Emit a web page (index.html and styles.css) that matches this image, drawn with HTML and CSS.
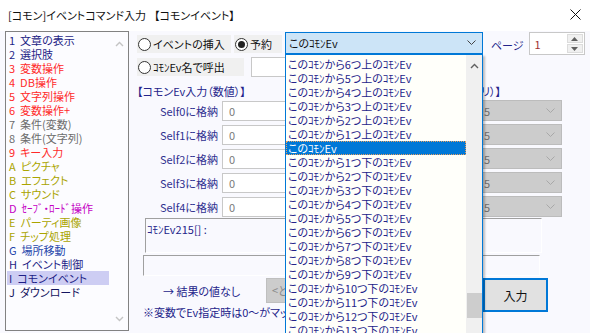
FILE: index.html
```html
<!DOCTYPE html>
<html lang="ja">
<head>
    <meta charset="UTF-8">
    <title>コモンイベント</title>
    <link rel="stylesheet" href="styles.css">
</head>
<body>
    <div class="titlebar">
        <span class="title">[コモン]イベントコマンド入力<span class="title-sub">【コモンイベント】</span></span>
        <svg class="close" width="11" height="11" viewBox="0 0 11 11">
            <path d="M0.5 0.5 L10.5 10.5 M10.5 0.5 L0.5 10.5" stroke="#111" stroke-width="1" fill="none"/>
        </svg>
    </div>

    <div class="main">
        <div class="cmdlist">
            <ul>
                <li class="navy"><b>1</b>文章の表示</li>
                <li class="navy"><b>2</b>選択肢</li>
                <li class="red"><b>3</b>変数操作</li>
                <li class="red"><b>4</b>DB操作</li>
                <li class="red"><b>5</b>文字列操作</li>
                <li class="red"><b>6</b>変数操作+</li>
                <li class="gray"><b>7</b>条件(変数)</li>
                <li class="gray"><b>8</b>条件(文字列)</li>
                <li class="red"><b>9</b>キー入力</li>
                <li class="olive"><b>A</b>ピクチャ</li>
                <li class="olive"><b>B</b>エフェクト</li>
                <li class="olive"><b>C</b>サウンド</li>
                <li class="magenta"><b>D</b>ｾｰﾌﾞ・ﾛｰﾄﾞ操作</li>
                <li class="olive"><b>E</b>パーティ画像</li>
                <li class="olive"><b>F</b>チップ処理</li>
                <li class="blue"><b>G</b>場所移動</li>
                <li class="navy"><b>H</b>イベント制御</li>
                <li class="navy current"><b>I</b>コモンイベント</li>
                <li class="dark"><b>J</b>ダウンロード</li>
            </ul>
            <div class="vscroll">
                <svg width="9" height="6" viewBox="0 0 9 6"><path d="M1 5 L4.5 1.5 L8 5" stroke="#c4c4c4" stroke-width="1.4" fill="none"/></svg>
                <svg width="9" height="6" viewBox="0 0 9 6"><path d="M1 1 L4.5 4.5 L8 1" stroke="#c4c4c4" stroke-width="1.4" fill="none"/></svg>
            </div>
        </div>

        <div class="panel">
            <div class="row1">
                <label class="radio box-insert"><span class="dot"></span>イベントの挿入</label>
                <label class="radio box-reserve"><span class="dot on"></span>予約</label>
                <div class="combo">
                    <span class="combo-text">このｺﾓﾝEv</span>
                    <svg width="9" height="6" viewBox="0 0 9 6"><path d="M0.5 0.5 L4.5 4.5 L8.5 0.5" stroke="#444" stroke-width="1" fill="none"/></svg>

                    <div class="droplist">
                        <ul>
                            <li>このｺﾓﾝから6つ上のｺﾓﾝEv</li>
                            <li>このｺﾓﾝから5つ上のｺﾓﾝEv</li>
                            <li>このｺﾓﾝから4つ上のｺﾓﾝEv</li>
                            <li>このｺﾓﾝから3つ上のｺﾓﾝEv</li>
                            <li>このｺﾓﾝから2つ上のｺﾓﾝEv</li>
                            <li>このｺﾓﾝから1つ上のｺﾓﾝEv</li>
                            <li class="selected">このｺﾓﾝEv</li>
                            <li>このｺﾓﾝから1つ下のｺﾓﾝEv</li>
                            <li>このｺﾓﾝから2つ下のｺﾓﾝEv</li>
                            <li>このｺﾓﾝから3つ下のｺﾓﾝEv</li>
                            <li>このｺﾓﾝから4つ下のｺﾓﾝEv</li>
                            <li>このｺﾓﾝから5つ下のｺﾓﾝEv</li>
                            <li>このｺﾓﾝから6つ下のｺﾓﾝEv</li>
                            <li>このｺﾓﾝから7つ下のｺﾓﾝEv</li>
                            <li>このｺﾓﾝから8つ下のｺﾓﾝEv</li>
                            <li>このｺﾓﾝから9つ下のｺﾓﾝEv</li>
                            <li>このｺﾓﾝから10つ下のｺﾓﾝEv</li>
                            <li>このｺﾓﾝから11つ下のｺﾓﾝEv</li>
                            <li>このｺﾓﾝから12つ下のｺﾓﾝEv</li>
                            <li>このｺﾓﾝから13つ下のｺﾓﾝEv</li>
                        </ul>
                        <div class="dscroll">
                            <svg width="9" height="6" viewBox="0 0 9 6"><path d="M1 5 L4.5 1.5 L8 5" stroke="#606060" stroke-width="1.4" fill="none"/></svg>
                            <div class="thumb"></div>
                        </div>
                    </div>
                </div>
                <span class="page-label">ページ</span>
                <div class="spin">
                    <span class="spin-val">1</span>
                    <div class="spin-btns">
                        <span><svg width="7" height="4" viewBox="0 0 7 4"><path d="M0 4 L3.5 0 L7 4 Z" fill="#606060"/></svg></span>
                        <span><svg width="7" height="4" viewBox="0 0 7 4"><path d="M0 0 L3.5 4 L7 0 Z" fill="#606060"/></svg></span>
                    </div>
                </div>
            </div>

            <div class="row2">
                <label class="radio box-name"><span class="dot"></span>ｺﾓﾝEv名で呼出</label>
                <div class="textbox name-input"></div>
            </div>

            <div class="heading-row">
                <span>【コモンEv入力（数値）】</span>
                <span>【呼出元ﾘｽﾄ（数値リ）】</span>
            </div>

            <div class="self-grid">
                <span class="self-label">Self0に格納</span>
                <div class="textbox">0</div>
                <div class="dsel">5<svg width="9" height="6" viewBox="0 0 9 6"><path d="M0.5 0.5 L4.5 4.5 L8.5 0.5" stroke="#a8a8a8" fill="none"/></svg></div>

                <span class="self-label">Self1に格納</span>
                <div class="textbox">0</div>
                <div class="dsel">5<svg width="9" height="6" viewBox="0 0 9 6"><path d="M0.5 0.5 L4.5 4.5 L8.5 0.5" stroke="#a8a8a8" fill="none"/></svg></div>

                <span class="self-label">Self2に格納</span>
                <div class="textbox">0</div>
                <div class="dsel">5<svg width="9" height="6" viewBox="0 0 9 6"><path d="M0.5 0.5 L4.5 4.5 L8.5 0.5" stroke="#a8a8a8" fill="none"/></svg></div>

                <span class="self-label">Self3に格納</span>
                <div class="textbox">0</div>
                <div class="dsel">5<svg width="9" height="6" viewBox="0 0 9 6"><path d="M0.5 0.5 L4.5 4.5 L8.5 0.5" stroke="#a8a8a8" fill="none"/></svg></div>

                <span class="self-label">Self4に格納</span>
                <div class="textbox">0</div>
                <div class="dsel">5<svg width="9" height="6" viewBox="0 0 9 6"><path d="M0.5 0.5 L4.5 4.5 L8.5 0.5" stroke="#a8a8a8" fill="none"/></svg></div>
            </div>

            <div class="sunken memo">ｺﾓﾝEv215[] :</div>
            <div class="sunken line"></div>

            <div class="bottom">
                <div class="bottom-left">
                    <div class="result-row">
                        <span class="result-text">→ 結果の値なし</span>
                        <div class="btn-disabled">&lt;どのイベントでも可&gt;</div>
                    </div>
                    <div class="note">※変数でEv指定時は0～がマップEv</div>
                </div>
                <div class="btn-enter">入力</div>
            </div>
        </div>
    </div>
</body>
</html>
```

FILE: styles.css
```css
body, ul, li {
    margin: 0;
    padding: 0;
}
body {
    width: 590px;
    height: 333px;
    overflow: hidden;
    background: #f9f9fe;
    font-family: "Noto Sans CJK JP", "Noto Sans", sans-serif;
    font-feature-settings: "palt";
    font-size: 11px;
    color: #24248a;
}
ul {
    list-style: none;
}

/* タイトルバー */
.titlebar {
    height: 31px;
    background: #fff;
    display: flex;
    align-items: center;
    justify-content: space-between;
    padding: 0 9px 2px 8px;
    box-sizing: border-box;
}
.title {
    color: #111;
    font-size: 11px;
}
.title-sub {
    margin-left: 8px;
}

.main {
    display: flex;
    align-items: flex-start;
    padding-left: 5px;
}

/* 左のコマンド一覧 */
.cmdlist {
    width: 122px;
    height: 298px;
    border: 1px solid #828282;
    background: #fcfcff;
    display: flex;
}
.cmdlist ul {
    width: 102px;
    margin: 1px 0 0 1px;
}
.cmdlist li {
    height: 14px;
    line-height: 14px;
    padding-left: 2px;
    white-space: nowrap;
}
.cmdlist li b {
    font-weight: normal;
    margin-right: 5px;
}
.cmdlist .current {
    background: #cdcdf3;
}
.navy { color: #1e1e86; }
.red { color: #ff2a2a; }
.gray { color: #6c6c6c; }
.olive { color: #aaa400; }
.magenta { color: #c400c4; }
.blue { color: #2244aa; }
.dark { color: #141460; }
.vscroll {
    width: 17px;
    margin-left: auto;
    display: flex;
    flex-direction: column;
    justify-content: space-between;
    align-items: center;
    padding: 9px 0 8px;
}

/* 右側 */
.panel {
    margin-left: 8px;
    width: 453px;
    display: flex;
    flex-direction: column;
}
.row1 {
    display: flex;
    align-items: flex-start;
    margin-top: 1px;
}
.radio {
    display: flex;
    align-items: center;
    height: 18px;
    background: #f0f0f0;
    color: #111;
    box-sizing: border-box;
    padding-left: 1px;
    white-space: nowrap;
}
.dot {
    width: 13px;
    height: 13px;
    border: 1px solid #333;
    border-radius: 50%;
    background: #fff;
    box-sizing: border-box;
    margin-right: 2px;
    position: relative;
}
.dot.on::after {
    content: "";
    position: absolute;
    left: 2px;
    top: 2px;
    width: 7px;
    height: 7px;
    border-radius: 50%;
    background: #222;
}
.box-insert {
    width: 94px;
    margin-top: 3px;
}
.box-reserve {
    width: 48px;
    margin: 3px 0 0 3px;
}
.combo {
    position: relative;
    width: 198px;
    height: 22px;
    margin-left: 3px;
    border: 1px solid #0078d7;
    background: #cce4f7;
    box-sizing: border-box;
    display: flex;
    align-items: center;
    justify-content: space-between;
    padding: 0 6px 0 3px;
    color: #111;
}
.droplist {
    position: absolute;
    z-index: 10;
    left: -1px;
    top: 21px;
    width: 198px;
    height: 279px;
    overflow: hidden;
    border: 1px solid #0078d7;
    border-bottom: none;
    background: #fffffa;
    box-sizing: border-box;
    display: flex;
    box-shadow: 2px 2px 2px rgba(0, 0, 0, 0.25);
}
.droplist ul {
    flex: 1;
    padding-top: 2px;
}
.droplist li {
    height: 14px;
    line-height: 14px;
    padding-left: 2px;
    white-space: nowrap;
    color: #24248a;
}
.droplist .selected {
    background: #0078d7;
    color: #fff;
    outline: 1px dotted #e8a060;
    outline-offset: -1px;
}
.dscroll {
    width: 16px;
    background: #f0f0f0;
    display: flex;
    flex-direction: column;
    align-items: center;
    padding-top: 8px;
    box-sizing: border-box;
}
.thumb {
    width: 15px;
    height: 25px;
    background: #cdcdcd;
    margin-top: 224px;
}
.page-label {
    margin: 5px 0 0 8px;
    color: #24248a;
}
.spin {
    width: 56px;
    height: 23px;
    margin-left: 5px;
    border: 1px solid #c8c8c8;
    background: #fff;
    box-sizing: border-box;
    display: flex;
}
.spin-val {
    flex: 1;
    padding: 3px 0 0 5px;
    color: #a03030;
}
.spin-btns {
    width: 16px;
    display: flex;
    flex-direction: column;
    gap: 1px;
    padding: 1px;
}
.spin-btns span {
    flex: 1;
    background: #f0f0f0;
    border: 1px solid #dcdcdc;
    display: flex;
    align-items: center;
    justify-content: center;
}

.row2 {
    display: flex;
    align-items: flex-start;
    margin-top: 2px;
}
.box-name {
    width: 107px;
    margin-top: 1px;
}
.textbox {
    height: 20px;
    border: 1px solid #c8c8c8;
    background: #fff;
    box-sizing: border-box;
    padding-left: 6px;
    line-height: 18px;
    color: #7a7a7a;
}
.name-input {
    width: 230px;
    margin-left: 7px;
}

.heading-row {
    display: flex;
    justify-content: space-between;
    width: 364px;
    height: 14px;
    line-height: 14px;
    margin-top: 7px;
    white-space: nowrap;
}

.self-grid {
    display: grid;
    grid-template-columns: 81px 248px 84px;
    grid-auto-rows: 21px;
    column-gap: 4px;
    row-gap: 3px;
    margin-top: 2px;
    align-items: center;
}
.self-label {
    text-align: right;
    color: #303090;
}
.dsel {
    height: 21px;
    margin-left: 4px;
    width: 84px;
    background: #cccccc;
    border: 1px solid #bcbcbc;
    box-sizing: border-box;
    display: flex;
    align-items: center;
    justify-content: space-between;
    padding: 0 6px 0 5px;
    color: #6d6d6d;
}

.sunken {
    width: 397px;
    box-sizing: border-box;
    border-top: 1px solid #a0a0a0;
    border-left: 1px solid #a0a0a0;
    border-right: 1px solid #fff;
    border-bottom: 1px solid #fff;
}
.memo {
    height: 35px;
    margin: 1px 0 0 8px;
    padding: 2px 0 0 1px;
    color: #24248a;
}
.line {
    height: 21px;
    margin: 2px 0 0 6px;
}

.bottom {
    display: flex;
    margin-top: 2px;
}
.bottom-left {
    width: 346px;
    overflow: hidden;
}
.result-row {
    display: flex;
    align-items: center;
    height: 25px;
}
.result-text {
    margin-left: 26px;
    width: 103px;
}
.btn-disabled {
    height: 25px;
    width: 150px;
    background: #cccccc;
    border: 1px solid #bfbfbf;
    box-sizing: border-box;
    color: #8a8a8a;
    line-height: 23px;
    padding-left: 5px;
    white-space: nowrap;
}
.note {
    margin: 2px 0 0 6px;
    height: 14px;
    line-height: 14px;
    white-space: nowrap;
}
.btn-enter {
    width: 65px;
    height: 34px;
    border: 2px solid #0078d7;
    background: #e1e1e1;
    box-sizing: border-box;
    display: flex;
    align-items: center;
    justify-content: center;
    color: #111;
    font-size: 12px;
}
```
